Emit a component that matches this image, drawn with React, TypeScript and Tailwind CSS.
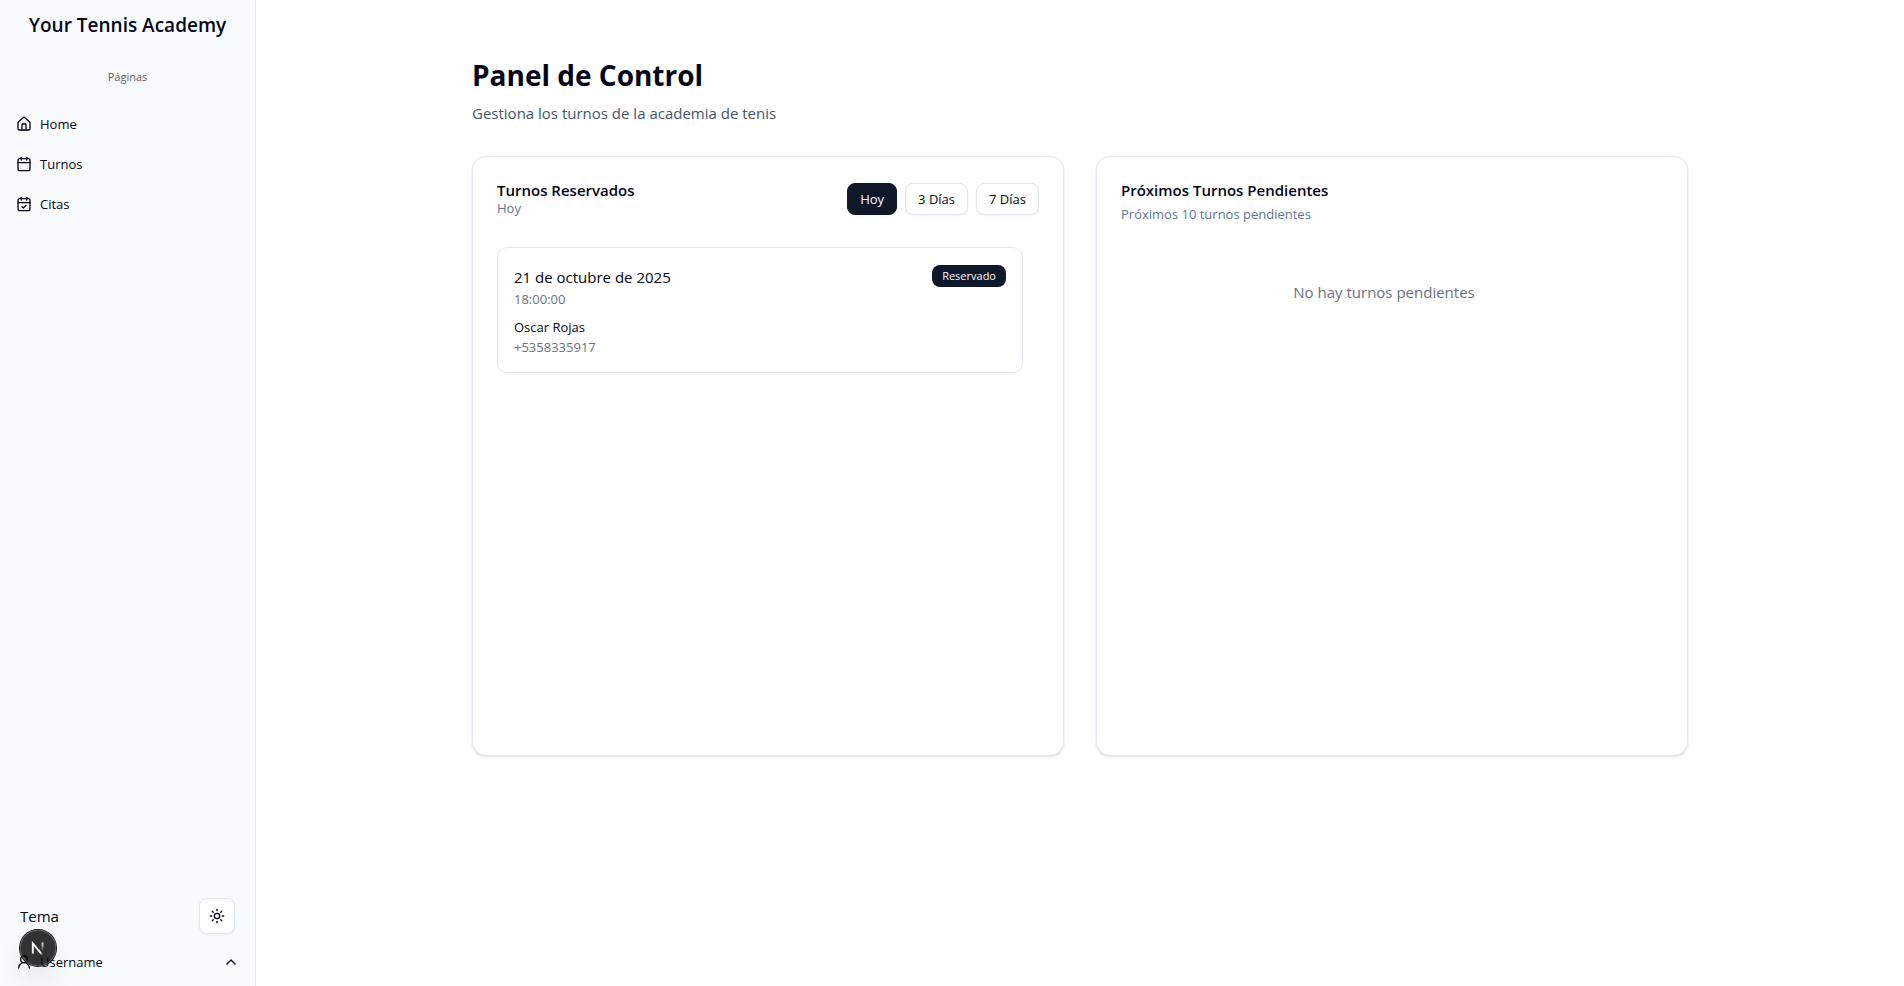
import { Calendar, CalendarCheck, ChevronUp, House, Sun, UserRound } from "lucide-react";

const pages = [
  { title: "Home", icon: House },
  { title: "Turnos", icon: Calendar },
  { title: "Citas", icon: CalendarCheck },
];

const ranges = ["Hoy", "3 Días", "7 Días"];

function Sidebar() {
  return (
    <aside className="flex w-64 shrink-0 flex-col border-r border-slate-200 bg-slate-50">
      <h2 className="pt-[11px] text-center text-[19px] leading-7 font-semibold">Your Tennis Academy</h2>
      <nav aria-label="Páginas" className="flex flex-1 flex-col px-2 pt-[22px]">
        <p className="flex h-8 items-center justify-center text-[11px] leading-4 text-slate-950/70">Páginas</p>
        <ul className="flex flex-col gap-2 pt-[15px]">
          {pages.map(({ title, icon: Icon }) => (
            <li key={title}>
              <a href="#" className="flex h-8 items-center gap-2 rounded-lg px-2 text-[13px] leading-5">
                <Icon size={16} aria-hidden="true" />
                {title}
              </a>
            </li>
          ))}
        </ul>
      </nav>
      <div className="flex items-center justify-between px-5 pb-3">
        <span className="text-[15px] leading-6">Tema</span>
        <button
          type="button"
          aria-label="Cambiar tema"
          className="flex size-9 items-center justify-center rounded-lg border border-slate-200 bg-white shadow-xs"
        >
          <Sun size={16} aria-hidden="true" />
        </button>
      </div>
      <div className="px-2 pb-2">
        <button type="button" className="flex h-8 w-full items-center gap-2 rounded-lg px-2 text-[13px] leading-5">
          <UserRound size={16} aria-hidden="true" />
          Username
          <ChevronUp size={16} className="ml-auto" aria-hidden="true" />
        </button>
      </div>
    </aside>
  );
}

function ReservedCard() {
  return (
    <section className="h-[600px] rounded-[14px] border border-slate-200 bg-white shadow-sm">
      <header className="flex items-center justify-between px-6 pt-6 pb-[30px]">
        <div>
          <h3 className="text-[15px] leading-[18px] font-semibold">Turnos Reservados</h3>
          <p className="text-[13px] leading-[18px] text-slate-500">Hoy</p>
        </div>
        <div className="flex gap-2">
          {ranges.map((label, i) => (
            <button
              key={label}
              type="button"
              className={
                i === 0
                  ? "h-8 rounded-lg border border-slate-900 bg-slate-900 px-3 text-[13px] leading-5 text-slate-50 shadow-xs"
                  : "h-8 rounded-lg border border-slate-200 bg-white px-3 text-[13px] leading-5 shadow-xs"
              }
            >
              {label}
            </button>
          ))}
        </div>
      </header>
      <div className="pr-10 pl-6">
        <article className="rounded-[10px] border border-slate-200 px-4 pt-[17px] pb-[15px]">
          <div className="flex items-start justify-between">
            <div>
              <p className="text-[15px] leading-6">21 de octubre de 2025</p>
              <p className="text-[13px] leading-5 text-gray-500">18:00:00</p>
            </div>
            <span className="rounded-lg bg-slate-900 px-2.5 py-[3px] text-[11px] leading-4 text-slate-50">
              Reservado
            </span>
          </div>
          <div className="mt-2 text-[13px] leading-5">
            <p>Oscar Rojas</p>
            <p className="text-gray-500">+5358335917</p>
          </div>
        </article>
      </div>
    </section>
  );
}

function PendingCard() {
  return (
    <section className="h-[600px] rounded-[14px] border border-slate-200 bg-white shadow-sm">
      <header className="flex flex-col gap-[5px] px-6 pt-6 pb-6">
        <h3 className="text-[15px] leading-[18px] font-semibold">Próximos Turnos Pendientes</h3>
        <p className="text-[13px] leading-5 text-slate-500">Próximos 10 turnos pendientes</p>
      </header>
      <p className="py-8 pr-10 pl-6 text-center text-[15px] leading-6 text-gray-500">No hay turnos pendientes</p>
    </section>
  );
}

function DevBadge() {
  return (
    <button
      type="button"
      aria-label="Herramientas de desarrollo"
      className="fixed bottom-5 left-5 flex size-9 items-center justify-center rounded-full bg-black/80 shadow-[0_0_0_1px_#171717,inset_0_0_0_1px_rgba(255,255,255,0.14),0_16px_32px_-8px_rgba(0,0,0,0.24)]"
    >
      <svg width="14" height="14" viewBox="0 0 14 14" fill="none" aria-hidden="true">
        <defs>
          <linearGradient id="diagonal" x1="7" y1="7" x2="12" y2="13" gradientUnits="userSpaceOnUse">
            <stop offset="0.6" stopColor="#fff" />
            <stop offset="1" stopColor="#fff" stopOpacity="0.2" />
          </linearGradient>
          <linearGradient id="stem" x1="11" y1="1" x2="11" y2="10" gradientUnits="userSpaceOnUse">
            <stop stopColor="#fff" />
            <stop offset="1" stopColor="#fff" stopOpacity="0" />
          </linearGradient>
        </defs>
        <path d="M1.800 12.500V2.500l9.200 11" stroke="url(#diagonal)" strokeWidth="1.900" />
        <path d="M11.500 1.500v9" stroke="url(#stem)" strokeWidth="1.900" />
      </svg>
    </button>
  );
}

export default function App() {
  return (
    <div className="flex min-h-screen bg-white font-['Open_Sans',sans-serif] text-slate-950">
      <Sidebar />
      <main className="flex-1">
        <div className="mx-auto max-w-7xl px-8 pt-[57px] pb-8">
          <h1 className="text-[28px] leading-9 font-bold">Panel de Control</h1>
          <p className="mt-2 text-[15px] leading-6 text-slate-600">Gestiona los turnos de la academia de tenis</p>
          <div className="mt-[31px] grid grid-cols-2 gap-8">
            <ReservedCard />
            <PendingCard />
          </div>
        </div>
      </main>
      <DevBadge />
    </div>
  );
}
